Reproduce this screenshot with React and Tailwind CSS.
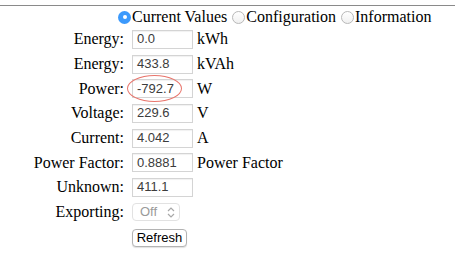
import React from 'react';

const rows = [
  { label: 'Energy:', value: '0.0', unit: 'kWh' },
  { label: 'Energy:', value: '433.8', unit: 'kVAh' },
  { label: 'Power:', value: '-792.7', unit: 'W', circled: true },
  { label: 'Voltage:', value: '229.6', unit: 'V' },
  { label: 'Current:', value: '4.042', unit: 'A' },
  { label: 'Power Factor:', value: '0.8881', unit: 'Power Factor' },
  { label: 'Unknown:', value: '411.1', unit: '' },
];

const Radio = ({ checked, label }) => (
  <label className="flex items-center">
    {checked ? (
      <span className="w-[13px] h-[13px] rounded-full bg-[#3b99fc] flex items-center justify-center">
        <span className="w-[4px] h-[4px] rounded-full bg-white" />
      </span>
    ) : (
      <span className="w-[13px] h-[13px] rounded-full border border-[#b8b8b8] bg-gradient-to-b from-white to-[#f0f0f0]" />
    )}
    <span className="ml-[1px]">{label}</span>
  </label>
);

const App = () => {
  return (
    <div
      className="w-[455px] h-[259px] bg-white overflow-hidden text-black text-[16px] leading-[18px]"
      style={{ fontFamily: '"Liberation Serif", "Times New Roman", serif' }}
    >
      <div className="mt-[5px] border-t border-[#8a8a8a]" />

      {/* Tabs */}
      <div className="flex items-center gap-[5px] pl-[118px] mt-[2px] h-[18px]">
        <Radio checked label="Current Values" />
        <Radio label="Configuration" />
        <Radio label="Information" />
      </div>

      {/* Readings */}
      <div className="relative mt-[1px]">
        {rows.map((r, i) => (
          <div key={i} className="flex items-center h-[24.7px]">
            <div className="w-[124px] text-right">{r.label}</div>
            <div
              className="ml-[8px] w-[61px] h-[19px] border border-[#d4d4d4] shadow-[inset_0_1px_1px_rgba(0,0,0,0.06)] flex items-center pl-[4px] text-[13px] text-[#3c3c3c]"
              style={{ fontFamily: '"Liberation Sans", Arial, sans-serif' }}
            >
              {r.value}
            </div>
            <div className="ml-[4px]">{r.unit}</div>
          </div>
        ))}

        {/* Exporting */}
        <div className="flex items-center h-[24.7px]">
          <div className="w-[124px] text-right">Exporting:</div>
          <div
            className="ml-[8px] w-[48px] h-[18px] rounded-[4px] border border-[#e2e2e2] flex items-center justify-between pl-[7px] pr-[4px] text-[13px] text-[#9a9a9a]"
            style={{ fontFamily: '"Liberation Sans", Arial, sans-serif' }}
          >
            <span>Off</span>
            <svg width="8" height="11" viewBox="0 0 8 11" fill="none" stroke="#a8a8a8" strokeWidth="1.2">
              <path d="M1 4 L4 1 L7 4" />
              <path d="M1 7 L4 10 L7 7" />
            </svg>
          </div>
        </div>

        {/* Refresh */}
        <div className="flex items-center h-[26px]">
          <button
            className="ml-[132px] w-[55px] h-[18px] rounded-[4px] border border-[#b3b3b3] bg-white shadow-[0_1px_1px_rgba(0,0,0,0.12)] text-[13px] leading-none text-black"
            style={{ fontFamily: '"Liberation Sans", Arial, sans-serif' }}
          >
            Refresh
          </button>
        </div>

        {/* annotation circle around Power */}
        <div className="absolute left-[127px] top-[48px] w-[55px] h-[27px] rounded-[50%] border border-[#e8756c]" />
      </div>
    </div>
  );
};

export default App;
